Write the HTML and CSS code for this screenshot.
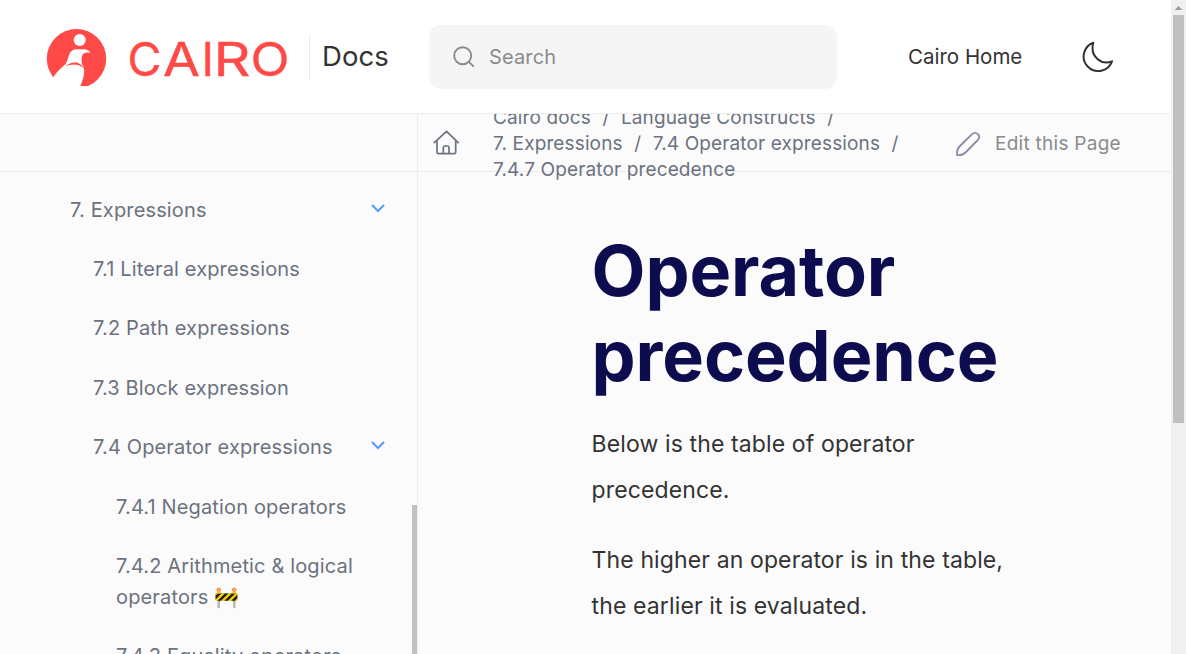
FILE: index.html
```html
<!DOCTYPE html>
<html lang="en">
<head>
<meta charset="utf-8">
<title>Operator precedence</title>
<link rel="stylesheet" href="styles.css">
</head>
<body>
<div class="page">
  <header class="header">
    <svg class="logo" viewBox="0 0 250 64" width="250" height="64">
      <clipPath id="mark"><rect x="0" y="0" width="70" height="60"/></clipPath>
      <g clip-path="url(#mark)">
        <circle cx="36.500" cy="32.700" r="29.700" fill="#ff4a48"/>
        <circle cx="39.700" cy="14" r="6" fill="#fff"/>
        <path fill="#fff" d="M12.700 52.300 C17 46 20 42.500 24 39.500 C28 36.500 27.500 32 29.300 28.300 Q31.500 23.300 37 23.300 H43.500 Q48.500 23.300 50.300 26.800 C45 26 42 27.500 41.700 31.500 C41.500 35 41.300 37 42.800 39.500 C45.300 44 44.500 51 39.800 61 H8Z"/>
        <path fill="#ff4a48" d="M25.500 40.300 C31 35.500 40 34.500 43.800 42.500 C39 37.300 32 37.800 25.500 40.300Z"/>
      </g>
      <g class="wordmark">
        <text x="87.500" y="50.400">C</text>
        <text x="123" y="50.400" textLength="37" lengthAdjust="spacingAndGlyphs">A</text>
        <text x="161.500" y="50.400">I</text>
        <text x="173.500" y="50.400" textLength="37" lengthAdjust="spacingAndGlyphs">R</text>
        <text x="210.500" y="50.400" textLength="39" lengthAdjust="spacingAndGlyphs">O</text>
      </g>
    </svg>
    <div class="docs">Docs</div>
    <div class="search">
      <svg width="22" height="22" viewBox="0 0 22 22" fill="none" stroke="#8b8b8b" stroke-width="1.900" stroke-linecap="round"><circle cx="9.700" cy="9.700" r="8.500"/><path d="m15.700 15.700 4.500 4.500"/></svg>
      <span>Search</span>
    </div>
    <a class="home-link">Cairo Home</a>
    <svg class="moon" width="32" height="32" viewBox="0 0 32 32" fill="none" stroke="#333" stroke-width="2" stroke-linejoin="round"><path d="M11.300 1.700 A14.600 14.600 0 1 0 30 20.300 C20 24.500 7.500 16 11.300 1.700Z"/></svg>
  </header>
  <div class="columns">
    <aside class="sidebar">
      <div class="sidebar-head"></div>
      <nav class="nav">
        <div class="item">7. Expressions<svg class="chevron" width="14" height="9" viewBox="0 0 14 9"><path d="m1 1 6 6 6-6"/></svg></div>
        <div class="item sub">7.1 Literal expressions</div>
        <div class="item sub">7.2 Path expressions</div>
        <div class="item sub">7.3 Block expression</div>
        <div class="item sub">7.4 Operator expressions<svg class="chevron" width="14" height="9" viewBox="0 0 14 9"><path d="m1 1 6 6 6-6"/></svg></div>
        <div class="item leaf">7.4.1 Negation operators</div>
        <div class="item leaf">7.4.2 Arithmetic &amp; logical<br>operators 🚧</div>
        <div class="item leaf">7.4.3 Equality operators</div>
      </nav>
      <div class="side-thumb"></div>
    </aside>
    <main class="main">
      <div class="toolbar">
        <svg class="house" width="26" height="26" viewBox="0 0 26 26" fill="none" stroke="#6b7280" stroke-width="1.700" stroke-linejoin="round" stroke-linecap="round"><path d="M1.300 12.700 13.500 1.300 25.200 12.700M4 10.500V22.200Q4 23.700 5.500 23.700H21.200Q22.700 23.700 22.700 22.200V10.500M10.300 23.700V17.500Q10.300 16 11.800 16H14.500Q16 16 16 17.500V23.700"/></svg>
        <div class="crumbs"><div>Cairo docs<i>/</i>Language Constructs<i>/</i></div><div>7. Expressions<i>/</i>7.4 Operator expressions<i>/</i></div><div>7.4.7 Operator precedence</div></div>
        <a class="edit"><svg width="26" height="26" viewBox="0 0 26 26" fill="none" stroke="#8e8ba8" stroke-width="1.800" stroke-linejoin="round"><path d="M2 24 Q1.500 18.500 4.500 15.500 L17 3.200 Q20 .500 23 3.200 Q25.500 6 22.800 9 L10.500 21.500 Q7.500 24.500 2 24Z"/></svg><span>Edit this Page</span></a>
      </div>
      <article class="article">
        <h1>Operator precedence</h1>
        <p>Below is the table of operator precedence.</p>
        <p>The higher an operator is in the table, the earlier it is evaluated.</p>
      </article>
    </main>
  </div>
</div>
<div class="scrollbar"><svg width="15" height="15" viewBox="0 0 15 15"><path d="M3.500 10 7.500 6 11.500 10Z" fill="#a0a0a0"/></svg><div class="thumb"></div></div>
</body>
</html>
```
FILE: styles.css
```css
* { box-sizing: border-box; }
body { margin: 0; height: 654px; overflow: hidden; display: flex; background: #fbfbfb; font-family: Inter, "Liberation Sans", sans-serif; color: #333; }
.page { width: 1171px; height: 654px; display: flex; flex-direction: column; overflow: hidden; }
.header { height: 114px; flex: none; background: #fff; border-bottom: 1px solid #ececec; display: flex; align-items: center; }
.logo { margin-left: 40px; flex: none; margin-top: 3px; }
.wordmark { font-family: Inter, sans-serif; font-size: 46.5px; fill: #ff4a48; stroke: #ff4a48; stroke-width: .4px; }
.docs { margin-left: 19px; width: 120px; height: 46px; line-height: 45px; border-left: 1px solid #ebebeb; padding-left: 12px; font-size: 27.5px; letter-spacing: .1px; }
.search { width: 408px; height: 64px; border-radius: 12px; background: #f5f5f5; display: flex; align-items: center; padding-left: 24px; gap: 14px; font-size: 20px; letter-spacing: .15px; color: #8b8b8b; }
.home-link { margin-left: 71px; width: 174px; font-size: 20.5px; }
.columns { flex: 1; display: flex; min-height: 0; }
.sidebar { width: 418px; flex: none; border-right: 1px solid #ececec; position: relative; overflow: hidden; }
.sidebar-head { height: 58px; border-bottom: 1px solid #ececec; }
.nav { padding: 8.5px 32px 0 70px; font-size: 20px; line-height: 31px; letter-spacing: .15px; color: #6b7280; }
.item { padding: 14.2px 0; position: relative; }
.sub { padding-left: 23px; }
.leaf { padding-left: 46px; }
.chevron { position: absolute; right: 0; top: 23px; fill: none; stroke: #5c96ff; stroke-width: 2; }
.side-thumb { position: absolute; left: 412px; top: 391px; width: 5px; height: 160px; background: #c1c1c1; }
.main { flex: 1; min-width: 0; }
.toolbar { height: 58px; border-bottom: 1px solid #ececec; display: flex; align-items: center; padding-left: 15px; clip-path: inset(0 0 -30px 0); }
.house { flex: none; }
.crumbs { margin: 1px 0 -1px 34px; width: 462px; font-size: 19px; line-height: 26px; letter-spacing: .13px; color: #6b7280; white-space: nowrap; }
.crumbs i { font-style: normal; margin: 0 11.5px; }
.edit { display: flex; align-items: center; gap: 14px; font-size: 19px; letter-spacing: .27px; color: #8b8b8b; white-space: nowrap; }
.edit span { margin: 2px 0 0; }
.edit svg { margin-top: 2px; }
.article { padding: 56px 0 0 173.6px; width: 620px; }
h1 { margin: 0; font-size: 70px; line-height: 85px; font-weight: 700; letter-spacing: -.1px; color: #0c0c4f; }
p { margin: 23px 0 0; font-size: 23px; line-height: 46px; letter-spacing: .12px; }
p + p { margin-top: 24px; }
.scrollbar { width: 15px; background: #f0f0f0; }
.scrollbar svg { display: block; }
.thumb { margin: 0 2px; height: 408px; background: #c0c0c0; }
```
